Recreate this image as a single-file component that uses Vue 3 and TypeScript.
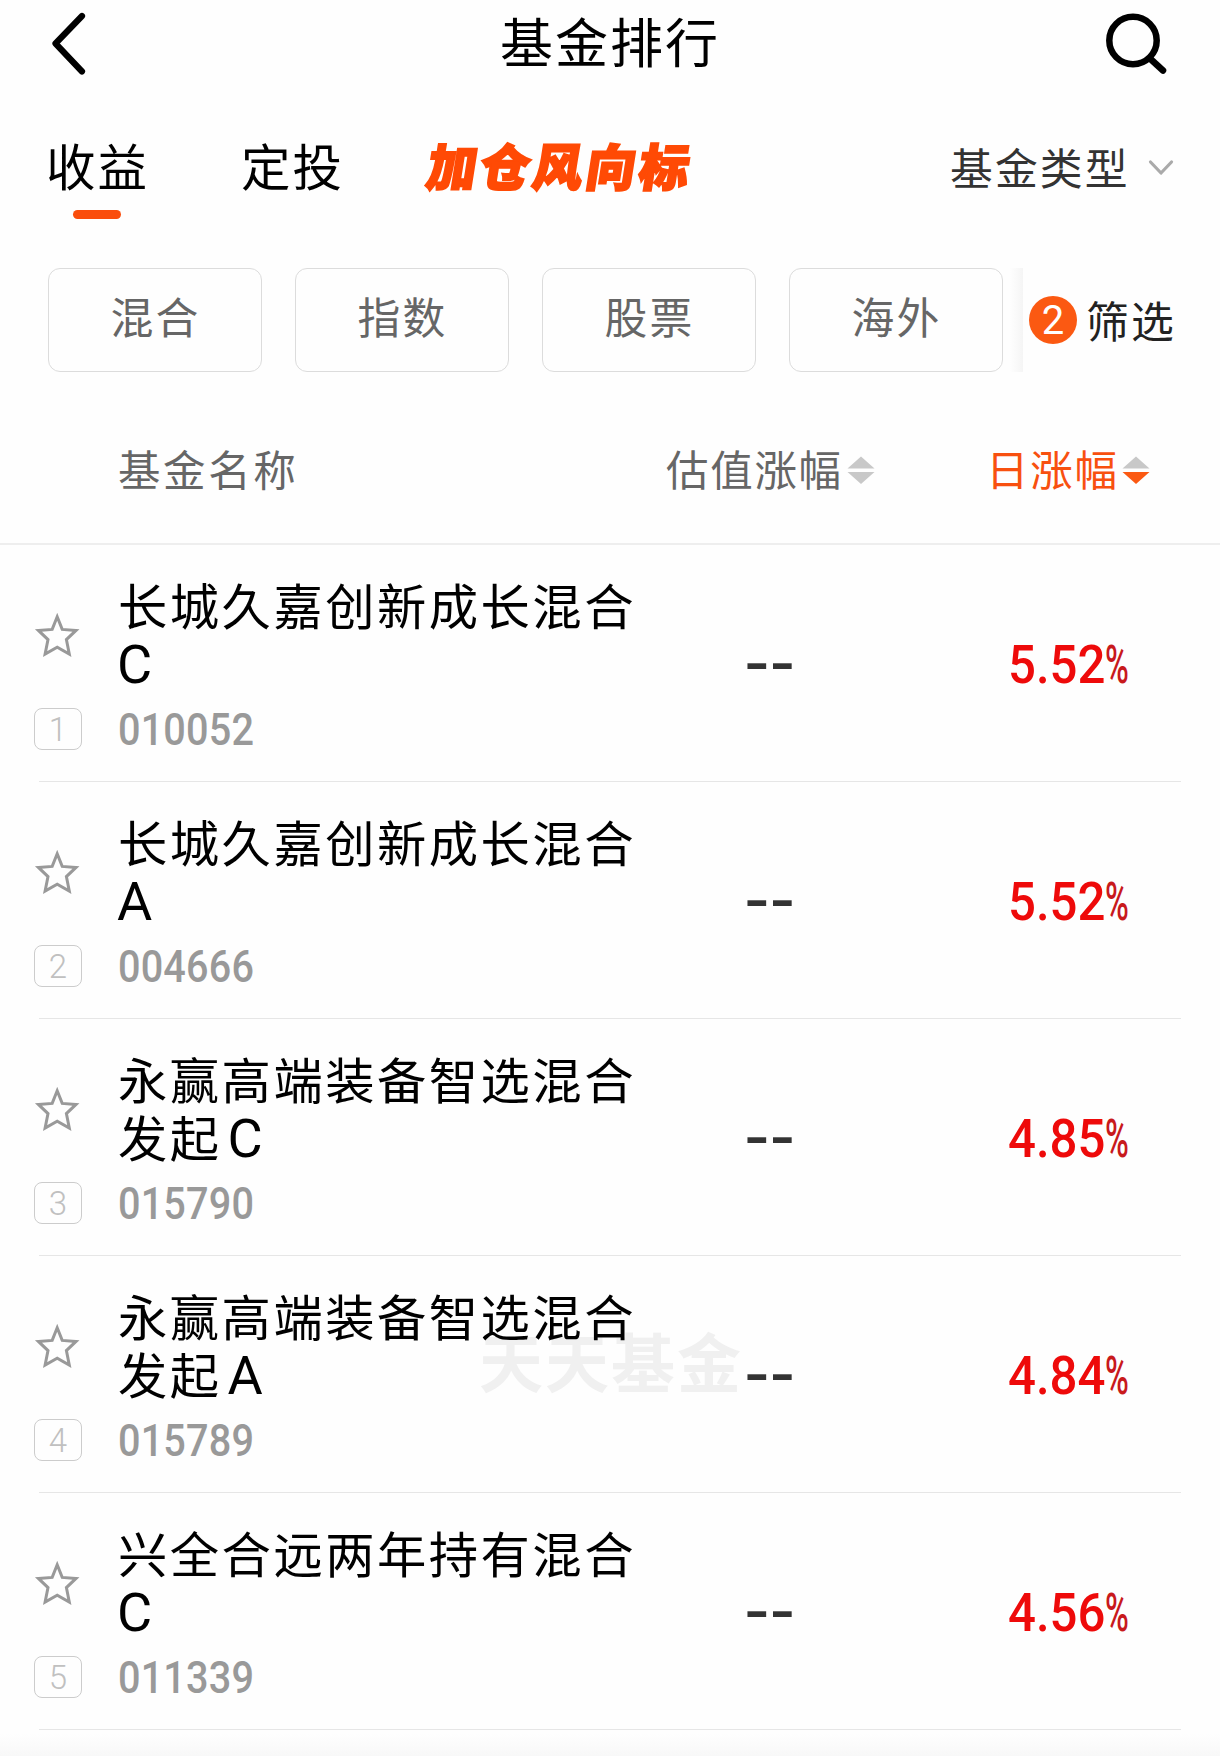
<script setup lang="ts">
interface Fund {
  name: string
  tail: string
  share: string
  code: string
  change: string
}

const chips: string[] = ['混合', '指数', '股票', '海外']

const funds: Fund[] = [
  { name: '长城久嘉创新成长混合', tail: '', share: 'C', code: '010052', change: '5.52' },
  { name: '长城久嘉创新成长混合', tail: '', share: 'A', code: '004666', change: '5.52' },
  { name: '永赢高端装备智选混合', tail: '发起', share: 'C', code: '015790', change: '4.85' },
  { name: '永赢高端装备智选混合', tail: '发起', share: 'A', code: '015789', change: '4.84' },
  { name: '兴全合远两年持有混合', tail: '', share: 'C', code: '011339', change: '4.56' },
]
</script>

<template>
  <main class="page">
    <header class="topbar">
      <svg class="back" width="40" height="68" viewBox="0 0 40 68">
        <path d="M34 6 7.500 33.500 34 61.500" />
      </svg>
      <h1 class="title">基金排行</h1>
      <svg class="search" width="66" height="66" viewBox="0 0 66 66">
        <circle cx="30" cy="30.5" r="23.700" />
        <path d="m47.500 49 12.500 11.500" />
      </svg>
    </header>

    <nav class="tabs">
      <span class="tab active">收益</span>
      <span class="tab">定投</span>
      <span class="promo">加仓风向标</span>
      <span class="type">基金类型</span>
      <svg class="chevron" width="26" height="18" viewBox="0 0 26 18">
        <path d="m2.500 3 10.500 11 10.500-11" />
      </svg>
    </nav>

    <section class="filters">
      <span v-for="chip in chips" :key="chip" class="chip">{{ chip }}</span>
      <i class="edge"></i>
      <span class="count">2</span>
      <span class="filter">筛选</span>
    </section>

    <section class="columns">
      <span class="col-name">基金名称</span>
      <span class="col-est">估值涨幅</span>
      <svg class="sort" width="28" height="28" viewBox="0 0 28 28">
        <path d="M14 .5 27.500 12.500H.5z" />
        <path d="M14 28 27.500 16H.5z" />
      </svg>
      <span class="col-day">日涨幅</span>
      <svg class="sort down" width="28" height="28" viewBox="0 0 28 28">
        <path d="M14 .5 27.500 12.500H.5z" />
        <path d="M14 28 27.500 16H.5z" />
      </svg>
    </section>

    <section class="list">
      <div class="watermark">天天基金</div>
      <article v-for="(fund, i) in funds" :key="fund.code" class="row">
        <div class="mark">
          <svg width="48" height="50" viewBox="0 0 48 50">
            <path
              d="M24.200 6.800 29.200 19.400 43 20.400 33.400 29.600 36.300 44 24.200 37.300 12.100 44 15 29.600 5.400 20.400 19.200 19.400Z"
            />
          </svg>
          <span class="rank">{{ i + 1 }}</span>
        </div>
        <div class="info">
          <div class="name">{{ fund.name }}</div>
          <div class="name">{{ fund.tail }}<span class="latin" :class="{ joined: fund.tail }">{{ fund.share }}</span></div>
          <div class="code">{{ fund.code }}</div>
        </div>
        <div class="estimate">--</div>
        <div class="change"><span class="value">{{ fund.change }}</span><span class="unit">%</span></div>
      </article>
    </section>
    <div class="fade"></div>
  </main>
</template>

<style>
body {
  background: #fefefe;
}
</style>

<style scoped>
.page {
  position: relative;
  width: 1220px;
  height: 1756px;
  overflow: hidden;
  background: #fefefe;
  font-family: 'Noto Sans CJK SC', sans-serif;
  color: #000;
  white-space: nowrap;
}

svg {
  display: block;
  flex: none;
  fill: none;
  stroke-linecap: round;
  stroke-linejoin: round;
}

.topbar {
  display: flex;
  align-items: flex-start;
  height: 132px;
}

.back {
  margin: 10px 0 0 48px;
  stroke: #000;
  stroke-width: 6.2;
}

.title {
  margin: 2px 0 0 412px;
  width: 218px;
  font-size: 53px;
  font-weight: 400;
  line-height: 76px;
  letter-spacing: 2px;
}

.search {
  margin: 10px 0 0 385px;
  stroke: #000;
  stroke-width: 6.5;
}

.tabs {
  display: flex;
  align-items: flex-start;
  height: 136px;
}

.tab {
  position: relative;
  margin-left: 46px;
  width: 100px;
  font-size: 49.5px;
  line-height: 66px;
  letter-spacing: 2.1px;
}

.tab + .tab {
  margin-left: 95px;
}

.active::after {
  content: '';
  position: absolute;
  left: 27px;
  top: 78px;
  width: 48px;
  height: 9px;
  border-radius: 5px;
  background: #fa4d0c;
}

.promo {
  margin-left: 87px;
  width: 264px;
  font-size: 50px;
  font-weight: 900;
  line-height: 64px;
  letter-spacing: 3px;
  color: #ff4a05;
  -webkit-text-stroke: 2px #ff4a05;
  transform: skewX(-9deg);
}

.type {
  margin-left: 258px;
  width: 178px;
  font-size: 42.8px;
  line-height: 68px;
  letter-spacing: 2.1px;
  color: #333;
}

.chevron {
  margin: 27px 0 0 20px;
  stroke: #aaa;
  stroke-width: 3.2;
}

.filters {
  display: flex;
  align-items: center;
  height: 104px;
  padding-left: 48px;
}

.chip {
  box-sizing: border-box;
  width: 214px;
  height: 104px;
  margin-right: 33px;
  border: 1.500px solid #dcdcdc;
  border-radius: 12px;
  padding-left: 1px;
  text-align: center;
  font-size: 42.8px;
  line-height: 93px;
  letter-spacing: 2.1px;
  color: #666;
}

.edge {
  width: 13px;
  height: 104px;
  margin-left: -26px;
  background: linear-gradient(90deg, #fefefe, #f5f5f5);
}

.count {
  width: 48px;
  height: 48px;
  margin-left: 6px;
  border-radius: 50%;
  background: #fb5912;
  color: #fff;
  font-family: Roboto, sans-serif;
  font-size: 40px;
  line-height: 49px;
  text-align: center;
}

.filter {
  margin-left: 9px;
  font-size: 42.8px;
  line-height: 60px;
  letter-spacing: 2.1px;
  color: #222;
  padding-bottom: 3px;
}

.columns {
  display: flex;
  align-items: center;
  box-sizing: border-box;
  height: 173px;
  padding-top: 24px;
  border-bottom: 2px solid #eee;
  font-size: 42.5px;
  line-height: 60px;
  letter-spacing: 2.6px;
  color: #666;
}

.columns span {
  padding-bottom: 4px;
}

.col-name {
  margin-left: 118px;
  width: 548px;
}

.col-est {
  width: 181px;
  letter-spacing: 1.7px;
}

.sort {
  fill: #c8c8c8;
}

.col-day {
  margin-left: 111px;
  width: 136px;
  letter-spacing: 1.8px;
  color: #f8500f;
}

.down path:last-child {
  fill: #fb5912;
}

.list {
  position: relative;
}

.watermark {
  position: absolute;
  left: 479px;
  top: 769px;
  font-size: 64px;
  font-weight: 700;
  line-height: 90px;
  letter-spacing: 2px;
  color: #f0f0f0;
}

.row {
  position: relative;
  display: flex;
  box-sizing: border-box;
  height: 237px;
}

.row::after {
  content: '';
  position: absolute;
  left: 39px;
  right: 39px;
  bottom: 0;
  height: 1px;
  background: #e6e6e6;
}

.mark {
  width: 118px;
  padding: 65px 0 0 33px;
  box-sizing: border-box;
}

.mark svg {
  stroke: #999;
  stroke-width: 3;
  stroke-linejoin: miter;
}

.rank {
  display: block;
  box-sizing: border-box;
  width: 48px;
  height: 42px;
  margin: 48px 0 0 1px;
  border: 1.500px solid #ccc;
  border-radius: 8px;
  font-family: Roboto, sans-serif;
  font-weight: 300;
  font-size: 33px;
  line-height: 41px;
  text-align: center;
  color: #c0c0c0;
}

.info {
  width: 626px;
  padding-top: 30px;
}

.name {
  height: 57.5px;
  font-size: 49.3px;
  line-height: 58px;
  letter-spacing: 2.5px;
}

.latin {
  display: inline-block;
  margin-left: -1px;
  font-family: Roboto, sans-serif;
  font-size: 54px;
  line-height: 1;
}

.joined {
  margin-left: 6px;
}

.code {
  margin-top: 10px;
  font-family: Roboto, sans-serif;
  font-size: 44px;
  font-weight: 500;
  line-height: 60px;
  letter-spacing: 0.200px;
  color: #999;
  transform: scaleX(0.9);
  transform-origin: 0 50%;
}

.estimate {
  width: 264px;
  font-family: 'DejaVu Sans', sans-serif;
  font-size: 71px;
  line-height: 84px;
  padding-top: 75px;
  color: #333;
}

.change {
  display: flex;
  padding-top: 90px;
  font-family: Roboto, sans-serif;
  font-size: 54px;
  line-height: 60px;
  color: #ee0a0a;
}

.value {
  width: 97px;
  font-weight: 500;
  transform: scaleX(0.91);
  transform-origin: 0 50%;
}

.unit {
  color: #c8191c;
  font-weight: 500;
  transform: scaleX(0.6);
  transform-origin: 0 50%;
}

.fade {
  position: absolute;
  left: 0;
  right: 0;
  bottom: 0;
  height: 22px;
  background: linear-gradient(#fefefe, #f8f8f8);
}
</style>
